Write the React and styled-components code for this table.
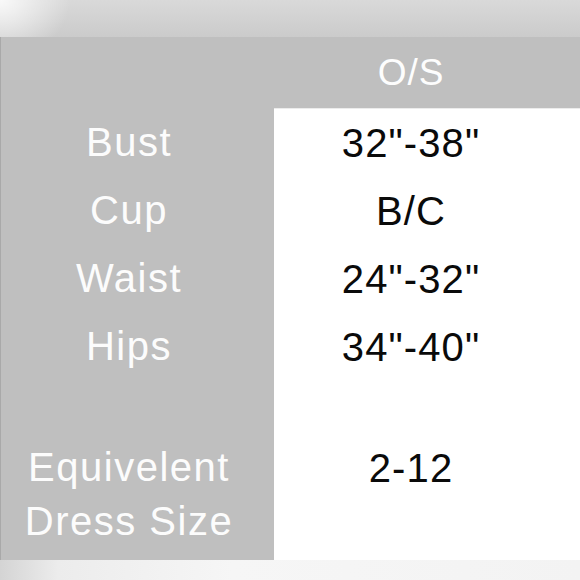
import React from "react";
import styled, { createGlobalStyle } from "styled-components";

const Global = createGlobalStyle`
  html, body { margin: 0; padding: 0; background: #f4f4f4; }
  body { font-family: "Liberation Sans", Arial, sans-serif; }
`;

const Page = styled.div`
  width: 580px;
  height: 580px;
  display: flex;
  flex-direction: column;
  overflow: hidden;
`;

const TopBand = styled.div`
  height: 37px;
  flex: none;
  background:
    radial-gradient(ellipse 70px 60px at 0 0, rgba(255,255,255,0.85), rgba(255,255,255,0) 100%),
    linear-gradient(to bottom, #d9d9d9, #cbcbcb);
`;

const Panel = styled.div`
  height: 523px;
  flex: none;
  display: flex;
  flex-direction: column;
  background: #bfbfbf;
  border-left: 1px solid #a9a9a9;
  box-sizing: border-box;
`;

const HeaderRow = styled.div`
  height: 71px;
  flex: none;
  display: grid;
  grid-template-columns: 273px 1fr;
  align-items: center;
`;

const HeaderCell = styled.div`
  grid-column: 2;
  padding-right: 32px;
  text-align: center;
  color: #fdfdfd;
  font-size: 37px;
  letter-spacing: 1px;
  line-height: 1;
`;

const Body = styled.div`
  flex: 1;
  display: flex;
`;

const Column = styled.div`
  display: flex;
  flex-direction: column;
  box-sizing: border-box;
  ${(p) =>
    p.$value
      ? `flex: 1; background: #fff; padding-right: 32px; color: #0a0a0a; letter-spacing: 1.1px; border-top: 1px solid #ececec;`
      : `width: 273px; padding-right: 17px; color: #fcfcfc; letter-spacing: 1.5px;`}
`;

const Cell = styled.div`
  height: ${(p) => p.$h}px;
  flex: none;
  text-align: center;
  font-size: 40px;
  line-height: ${(p) => p.$lh || p.$h}px;
  white-space: nowrap;
`;

const rows = [
  ["Bust", '32"-38"'],
  ["Cup", "B/C"],
  ["Waist", '24"-32"'],
  ["Hips", '34"-40"'],
];

export default function App() {
  return (
    <Page>
      <Global />
      <TopBand />
      <Panel>
        <HeaderRow>
          <HeaderCell>O/S</HeaderCell>
        </HeaderRow>
        <Body>
          <Column>
            {rows.map(([l]) => (
              <Cell key={l} $h={68}>{l}</Cell>
            ))}
            <Cell $h={60} />
            <Cell $h={108} $lh={54}>
              Equivelent
              <br />
              Dress Size
            </Cell>
          </Column>
          <Column $value>
            {rows.map(([l, v]) => (
              <Cell key={l} $h={68}>{v}</Cell>
            ))}
            <Cell $h={60} />
            <Cell $h={108} $lh={54}>2-12</Cell>
          </Column>
        </Body>
      </Panel>
      <BottomBand />
    </Page>
  );
}

const BottomBand = styled.div`
  flex: 1;
  background: linear-gradient(to right, #d4d4d4 0%, #ececec 10%, #f6f6f6 40%, #f3f3f3 100%);
`;
